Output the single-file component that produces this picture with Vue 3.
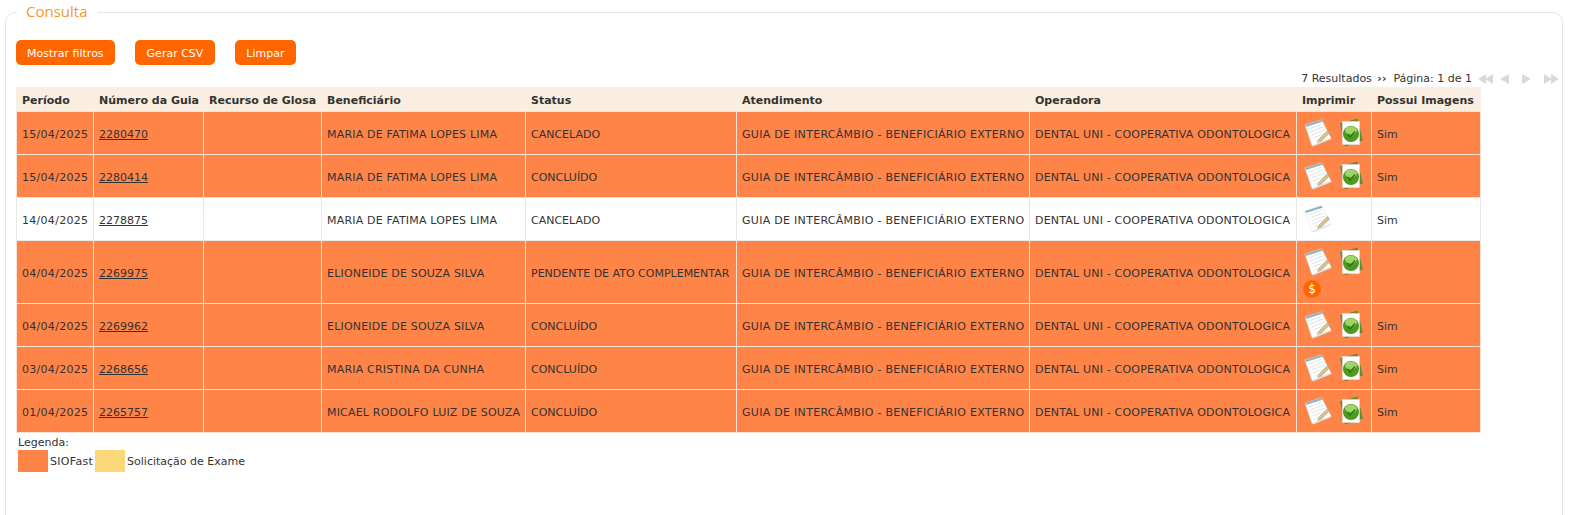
<template>
  <div class="page">
    <fieldset class="box">
      <legend>Consulta</legend>

      <div class="actions">
        <button class="btn">Mostrar filtros</button>
        <button class="btn wide">Gerar CSV</button>
        <button class="btn">Limpar</button>
      </div>

      <div class="result-area">
        <div class="pager">
          <span class="pager-text">7 Resultados <b>››</b> &nbsp;Página: 1 de 1</span>
          <svg class="pager-icons" width="81" height="10" viewBox="0 0 81 10">
            <path d="M8 0v10L0 5zM15 0v10L7 5zM31 0v10l-9-5zM44 0v10l9-5zM66 0v10l8-5zM73 0v10l8-5z" fill="#d9d9d9" />
          </svg>
        </div>

        <table class="grid">
          <colgroup>
            <col v-for="w in colWidths" :key="w.id" :style="{ width: w.px + 'px' }" />
          </colgroup>
          <thead>
            <tr>
              <th v-for="h in headers" :key="h">{{ h }}</th>
            </tr>
          </thead>
          <tbody>
            <tr v-for="row in rows" :key="row.guia" :class="{ fast: row.fast }">
              <td class="sp-date">{{ row.data }}</td>
              <td><a href="#" class="guia">{{ row.guia }}</a></td>
              <td></td>
              <td class="sp-name">{{ row.nome }}</td>
              <td>{{ row.status }}</td>
              <td class="sp-date">GUIA DE INTERCÂMBIO - BENEFICIÁRIO EXTERNO</td>
              <td class="sp-name">DENTAL UNI - COOPERATIVA ODONTOLOGICA</td>
              <td class="print-cell">
                <div class="print-icons">
                  <svg class="ico" width="28" height="29" viewBox="0 0 28 29">
                    <path d="M2 9l16-6 9.500 18L9 28.500z" fill="#dfe2e4" />
                    <path d="M1 7l16.500-5.300L27 20 8 27.500z" fill="#fff" stroke="#dde0e2" stroke-width=".5" />
                    <path d="M1 7l16.500-5.300 1 2L2 9z" fill="#8fb4c4" />
                    <path d="M4.500 11l13-5M6 14l13-5M7.500 17l13-5M9 20l8.500-3.300M10.500 23l5-2" stroke="#e0e3e5" stroke-width="1" />
                    <path d="M23.500 12.500l-8 8-2 4 4-1.500 8-8z" fill="#d6c08c" stroke="#a39a70" stroke-width=".5" />
                  </svg>
                  <svg v-if="row.check" class="ico" width="26" height="29" viewBox="0 0 26 29">
                    <path d="M1 5.500L18.500.5 24 22.500 6 28.500z" fill="#5f8f3a" />
                    <rect x="3.500" y="3.500" width="17" height="23" fill="#fff" stroke="#e6e6e6" stroke-width=".5" />
                    <circle cx="12" cy="16" r="8" fill="#4d9a22" />
                    <ellipse cx="12" cy="12.500" rx="6" ry="4" fill="#9fd566" />
                    <path d="M8.500 16l2.500 3 5-5.500" fill="none" stroke="#2f7a14" stroke-width="1.500" />
                  </svg>
                  <span v-if="row.pay" class="pay">$</span>
                </div>
              </td>
              <td>{{ row.imagens }}</td>
            </tr>
          </tbody>
        </table>

        <div class="legend-block">
          <div class="legend-title">Legenda:</div>
          <div class="legend-row">
            <span class="swatch orange"></span>
            <span class="legend-first">SIOFast</span>
            <span class="swatch yellow"></span>
            <span>Solicitação de Exame</span>
          </div>
        </div>
      </div>
    </fieldset>
  </div>
</template>

<script setup>
const headers = [
  'Período',
  'Número da Guia',
  'Recurso de Glosa',
  'Beneficiário',
  'Status',
  'Atendimento',
  'Operadora',
  'Imprimir',
  'Possui Imagens',
]

const colWidths = [77, 110, 118, 204, 211, 293, 267, 75, 109].map((px, id) => ({ id, px }))

const rows = [
  { data: '15/04/2025', guia: '2280470', nome: 'MARIA DE FATIMA LOPES LIMA', status: 'CANCELADO', fast: true, check: true, imagens: 'Sim' },
  { data: '15/04/2025', guia: '2280414', nome: 'MARIA DE FATIMA LOPES LIMA', status: 'CONCLUÍDO', fast: true, check: true, imagens: 'Sim' },
  { data: '14/04/2025', guia: '2278875', nome: 'MARIA DE FATIMA LOPES LIMA', status: 'CANCELADO', fast: false, check: false, imagens: 'Sim' },
  { data: '04/04/2025', guia: '2269975', nome: 'ELIONEIDE DE SOUZA SILVA', status: 'PENDENTE DE ATO COMPLEMENTAR', fast: true, check: true, pay: true, imagens: '' },
  { data: '04/04/2025', guia: '2269962', nome: 'ELIONEIDE DE SOUZA SILVA', status: 'CONCLUÍDO', fast: true, check: true, imagens: 'Sim' },
  { data: '03/04/2025', guia: '2268656', nome: 'MARIA CRISTINA DA CUNHA', status: 'CONCLUÍDO', fast: true, check: true, imagens: 'Sim' },
  { data: '01/04/2025', guia: '2265757', nome: 'MICAEL RODOLFO LUIZ DE SOUZA', status: 'CONCLUÍDO', fast: true, check: true, imagens: 'Sim' },
]
</script>

<style>
html,
body {
  margin: 0;
  height: 515px;
  overflow: hidden;
  background: #fff;
}
</style>

<style scoped>
.page {
  padding: 0 12px 0 5px;
  font-family: "DejaVu Sans", Verdana, sans-serif;
  font-size: 11px;
  color: #333;
}

.box {
  margin: 0;
  padding: 16px 10px 0;
  min-height: 560px;
  min-width: 0;
  border: 1px solid #e6e6e6;
  border-radius: 10px;
}

.box legend {
  padding: 0 10px 2px;
  font-family: "Open Sans", sans-serif;
  font-size: 15px;
  line-height: 22px;
  color: #f39a2b;
}

.actions {
  display: flex;
  gap: 20px;
}

.btn {
  height: 25px;
  padding: 1px 11px 0;
  border: 0;
  border-radius: 5px;
  background: #ff6600;
  color: #fff;
  font-family: "DejaVu Sans", Verdana, sans-serif;
  font-size: 11px;
}

.btn.wide {
  padding: 1px 12px 0;
}

.result-area {
  margin-top: 5px;
  width: 1464px;
}

.pager {
  display: flex;
  justify-content: flex-end;
  align-items: center;
  height: 17px;
  margin-right: -79px;
  gap: 6px;
}

.pager-text b {
  margin-left: 2px;
  font-weight: bold;
}

.pager-icons {
  display: block;
}

.grid {
  width: 1464px;
  table-layout: fixed;
  border-collapse: collapse;
}

.grid th {
  height: 24px;
  padding: 2px 5px 0;
  box-sizing: border-box;
  background: #f9eedf;
  border: 1px solid #f5f0e6;
  border-bottom: 0;
  text-align: left;
  font-weight: bold;
  white-space: nowrap;
  color: #333;
}

.grid td {
  height: 43px;
  padding: 2px 5px 0;
  box-sizing: border-box;
  border: 1px solid #e8e8e8;
  white-space: nowrap;
  overflow: hidden;
}

.grid tr.fast td {
  background: #ff8448;
  border-color: #f7e3d6;
}

.grid td.sp-date {
  letter-spacing: 0.29px;
}

.grid td.sp-name {
  letter-spacing: 0.19px;
}

.guia {
  color: #333;
  text-decoration: underline;
}

.grid td.print-cell {
  padding: 6px 2px 0 7px;
  vertical-align: top;
  white-space: normal;
}

.print-icons {
  display: flex;
  flex-wrap: wrap;
  align-items: flex-start;
  column-gap: 7px;
  width: 62px;
}

.ico {
  display: block;
  margin-bottom: 4px;
}

.pay {
  display: flex;
  align-items: center;
  justify-content: center;
  width: 18px;
  height: 18px;
  margin: 0 0 5px -1px;
  border-radius: 50%;
  background: #ff6600;
  color: #fff;
  font-size: 12px;
}

.legend-block {
  margin: 3px 0 0 2px;
}

.legend-title {
  line-height: 14px;
}

.legend-row {
  display: flex;
  align-items: center;
}

.swatch {
  width: 30px;
  height: 22px;
  margin-right: 2px;
}

.legend-first {
  letter-spacing: 0.3px;
}

.orange {
  background: #ff8448;
}

.yellow {
  background: #fad878;
  margin-left: 2px;
}
</style>
